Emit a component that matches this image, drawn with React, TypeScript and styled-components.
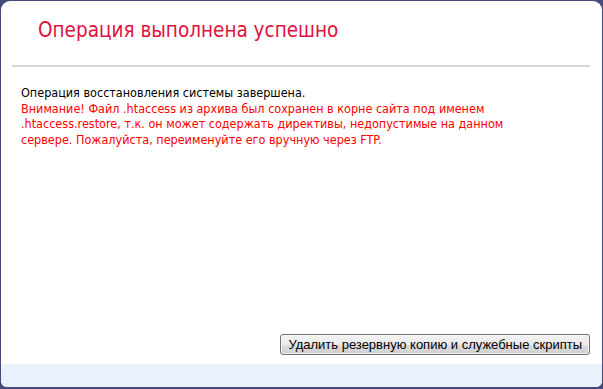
import React, { FC } from 'react';
import styled, { createGlobalStyle } from 'styled-components';

const Global = createGlobalStyle`
	html, body {
		margin: 0;
		height: 100%;
		background: #464a79;
	}
	#root {
		height: 100%;
	}
`;

const Frame = styled.div`
	box-sizing: border-box;
	height: 100%;
	padding: 1px 1px 2px 1px;
	display: flex;
`;

const Window = styled.div`
	flex: 1;
	display: flex;
	flex-direction: column;
	background: #fff;
	border-radius: 9px 9px 6px 6px;
	overflow: hidden;
`;

const Title = styled.h1`
	margin: 0;
	padding: 16px 0 0 37px;
	height: 46px;
	box-sizing: border-box;
	font-family: 'DejaVu Sans Condensed', 'DejaVu Sans', Verdana, sans-serif;
	font-weight: normal;
	font-size: 20.5px;
	line-height: 26px;
	color: #e0113d;
`;

const Rule = styled.hr`
	margin: 18px 12px 0 11px;
	height: 2px;
	border: 0;
	background: #d5d5d5;
`;

const Body = styled.div`
	flex: 1;
	padding: 18px 70px 0 20px;
	font-family: 'DejaVu Sans Condensed', 'DejaVu Sans', Verdana, sans-serif;
	font-size: 12.5px;
	line-height: 15.5px;
	color: #000;
`;

const Warning = styled.div`
	color: #ff0000;
`;

const Actions = styled.div`
	display: flex;
	justify-content: flex-end;
	padding: 0 12px 9px 0;
`;

const Button = styled.button`
	height: 21px;
	padding: 0 7px;
	font-family: 'Liberation Sans', Arial, sans-serif;
	font-size: 13px;
	color: #000;
	border: 1px solid #707070;
	border-radius: 3px;
	background: linear-gradient(#f2f2f2 0%, #ebebeb 50%, #dddddd 51%, #cfcfcf 100%);
	box-shadow: inset 0 0 0 1px rgba(255, 255, 255, 0.7);
`;

const Footer = styled.div`
	height: 23px;
	background: #e9f2fa;
`;

const App: FC = () => (
	<>
		<Global />
		<Frame>
			<Window>
				<Title>Операция выполнена успешно</Title>
				<Rule />
				<Body>
					Операция восстановления системы завершена.
					<Warning>
						Внимание! Файл .htaccess из архива был сохранен в корне сайта под именем .htaccess.restore, т.к. он может содержать директивы, недопустимые на данном сервере. Пожалуйста, переименуйте его вручную через FTP.
					</Warning>
				</Body>
				<Actions>
					<Button>Удалить резервную копию и служебные скрипты</Button>
				</Actions>
				<Footer />
			</Window>
		</Frame>
	</>
);

export default App;
